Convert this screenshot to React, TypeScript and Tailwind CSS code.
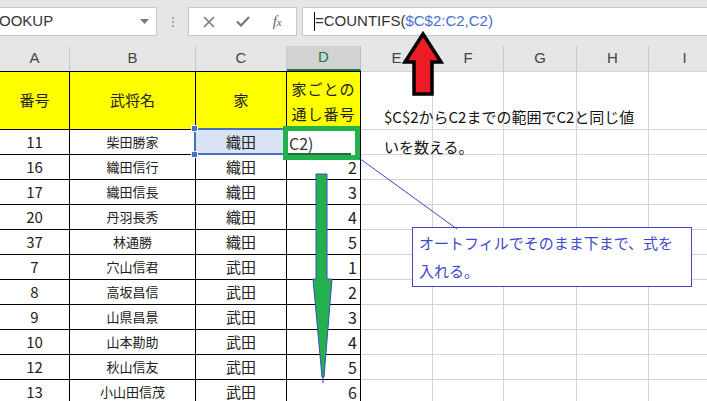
import React from 'react';

const jp = { fontFamily: '"Noto Sans CJK JP", "Noto Sans", sans-serif' };
const ui = { fontFamily: '"Liberation Sans", Arial, sans-serif' };

const rows: [string, string, string, string][] = [
  ['11', '柴田勝家', '織田', ''],
  ['16', '織田信行', '織田', '2'],
  ['17', '織田信長', '織田', '3'],
  ['20', '丹羽長秀', '織田', '4'],
  ['37', '林通勝', '織田', '5'],
  ['7', '穴山信君', '武田', '1'],
  ['8', '高坂昌信', '武田', '2'],
  ['9', '山県昌景', '武田', '3'],
  ['10', '山本勘助', '武田', '4'],
  ['12', '秋山信友', '武田', '5'],
  ['13', '小山田信茂', '武田', '6'],
];

const headers = ['A', 'B', 'C', 'D', 'E', 'F', 'G', 'H', 'I'];
const widths = ['w-[70px]', 'w-[126px]', 'w-[91px]', 'w-[74px]', 'w-[72px]', 'w-[71px]', 'w-[73px]', 'w-[72px]', 'w-[72px]'];

const FormulaBar = () => (
  <div className="h-[46px] bg-[#e6e6e6] flex items-start pt-[7px]" style={ui}>
    {/* Name box */}
    <div className="w-[157px] h-[29px] bg-white border border-l-0 border-[#c6c6c6] flex items-center justify-between pr-[7px]">
      <span className="text-[15px] text-[#333] -ml-[1px]">OOKUP</span>
      <svg width="9" height="5" viewBox="0 0 9 5">
        <path d="M0 0 L9 0 L4.5 5 Z" fill="#7a7a7a" />
      </svg>
    </div>
    <div className="w-[31px] h-[29px] flex flex-col items-center justify-center gap-[2px]">
      <span className="w-[2px] h-[2px] bg-[#a6a6a6]" />
      <span className="w-[2px] h-[2px] bg-[#a6a6a6]" />
      <span className="w-[2px] h-[2px] bg-[#a6a6a6]" />
    </div>
    {/* Cancel / Enter / fx */}
    <div className="w-[109px] h-[29px] bg-white border border-[#c6c6c6] flex items-center">
      <div className="w-[40px] flex justify-center">
        <svg width="12" height="12" viewBox="0 0 12 12">
          <path d="M1 1 L11 11 M11 1 L1 11" stroke="#777" strokeWidth="1.6" />
        </svg>
      </div>
      <div className="w-[30px] flex justify-center">
        <svg width="14" height="11" viewBox="0 0 14 11">
          <path d="M1 5.5 L5 9.5 L13 1" stroke="#777" strokeWidth="2.2" fill="none" />
        </svg>
      </div>
      <div className="w-[38px] flex justify-center">
        <span className="italic text-[15px] text-[#666]" style={{ fontFamily: '"Liberation Serif", serif' }}>
          f<span className="text-[11px]">x</span>
        </span>
      </div>
    </div>
    {/* Formula input */}
    <div className="ml-[5px] flex-1 h-[29px] bg-white border border-r-0 border-[#c6c6c6] flex items-center pl-[11px]">
      <span className="w-[1px] h-[19px] bg-black" />
      <span className="text-[15px] text-[#333]">=COUNTIFS(</span>
      <span className="text-[15px] text-[#4a6fd0]">$C$2:C2,C2)</span>
    </div>
  </div>
);

const ColumnHeaders = () => (
  <div className="h-[25px] flex bg-[#e6e6e6]" style={ui}>
    {headers.map((h, i) =>
      h === 'D' ? (
        <div key={h} className={`${widths[i]} shrink-0 bg-[#d2d2d2] border-r border-[#bdbdbd] border-b-2 border-b-[#217346] flex items-center justify-center text-[15px] text-[#217346]`}>
          {h}
        </div>
      ) : (
        <div key={h} className={`${widths[i]} shrink-0 border-r border-[#c8c8c8] flex items-center justify-center text-[15px] text-[#444]`}>
          {h}
        </div>
      )
    )}
  </div>
);

const Grid = () => (
  <div className="grid grid-cols-[70px_126px_91px_74px_72px_71px_73px_72px_72px] grid-rows-[59px_repeat(11,25px)] text-[#222]" style={jp}>
    {/* header row */}
    <div className="bg-[#ffff00] border-t border-r border-b border-black flex items-center justify-center text-[15px]">番号</div>
    <div className="bg-[#ffff00] border-t border-r border-b border-black flex items-center justify-center text-[15px]">武将名</div>
    <div className="bg-[#ffff00] border-t border-r border-b border-black flex items-center justify-center text-[15px]">家</div>
    <div className="bg-[#ffff00] border-t border-r border-b border-black flex items-center justify-center text-center text-[15px] leading-[25px] tracking-[1px]">
      家ごとの<br />通し番号
    </div>
    <div className="border-t border-r border-b border-[#d4d4d4]" />
    <div className="border-t border-r border-b border-[#d4d4d4]" />
    <div className="border-t border-r border-b border-[#d4d4d4]" />
    <div className="border-t border-r border-b border-[#d4d4d4]" />
    <div className="border-t border-r border-b border-[#d4d4d4]" />
    {rows.map((r, i) => (
      <React.Fragment key={i}>
        <div className="border-r border-b border-black flex items-center justify-center text-[15px]">{r[0]}</div>
        <div className="border-r border-b border-black flex items-center justify-center text-[13px]">{r[1]}</div>
        <div className={`border-r border-b border-black flex items-center justify-center text-[15px] ${i === 0 ? 'bg-[#dae3f3]' : ''}`}>{r[2]}</div>
        <div className="border-r border-b border-black flex items-center justify-end pr-[3px] text-[16px]">{r[3]}</div>
        <div className="border-r border-b border-[#d4d4d4]" />
        <div className="border-r border-b border-[#d4d4d4]" />
        <div className="border-r border-b border-[#d4d4d4]" />
        <div className="border-r border-b border-[#d4d4d4]" />
        <div className="border-r border-b border-[#d4d4d4]" />
      </React.Fragment>
    ))}
  </div>
);

export default function App() {
  return (
    <div className="relative w-[707px] h-[401px] overflow-hidden bg-white">
      <FormulaBar />
      <ColumnHeaders />
      <Grid />

      {/* selected cell C2 */}
      <div className="absolute left-[194px] top-[128px] w-[92px] h-[27px] border-2 border-[#4472c4]" />
      <span className="absolute left-[191px] top-[125px] w-[7px] h-[7px] bg-[#4472c4] border border-white" />
      <span className="absolute left-[191px] top-[151px] w-[7px] h-[7px] bg-[#4472c4] border border-white" />

      {/* active cell D2 in edit mode */}
      <div className="absolute left-[283px] top-[126px] w-[77px] h-[34px] border-[5px] border-[#22b14c] bg-white flex items-center" style={jp}>
        <span className="pl-[1px] text-[16px] text-[#333]">C2)</span>
        <span className="absolute left-0 right-[4px] bottom-0 h-[2px] bg-[#1f6e40]" />
      </div>

      {/* note text */}
      <div className="absolute left-[384px] top-[102px] text-[15px] leading-[30px] text-[#111]" style={jp}>
        <div>$C$2からC2までの範囲でC2と同じ値</div>
        <div>いを数える。</div>
      </div>

      {/* callout box */}
      <div className="absolute left-[412px] top-[227px] w-[280px] h-[60px] border border-[#3f48cc] bg-white pl-[6px] pt-[1px] text-[15px] leading-[28px] text-[#3f48cc]" style={jp}>
        <div>オートフィルでそのまま下まで、式を</div>
        <div>入れる。</div>
      </div>

      {/* drawings */}
      <svg className="absolute left-0 top-0 pointer-events-none" width="707" height="401" viewBox="0 0 707 401">
        <line x1="359" y1="158" x2="457" y2="229" stroke="#3f48cc" strokeWidth="1" />
        <polygon
          points="423,34 441,62 432,62 432,94 414,94 414,62 405,62"
          fill="#ed1c24"
          stroke="#000"
          strokeWidth="3.5"
          strokeLinejoin="miter"
        />
        <polygon
          points="316,174 327,174 327,279 332,279 324,377 322,377 313,279 316,279"
          fill="#22b14c"
          stroke="#3f48cc"
          strokeWidth="1"
        />
        <line x1="323" y1="376" x2="323" y2="383" stroke="#3f48cc" strokeWidth="1.2" />
      </svg>
    </div>
  );
}
